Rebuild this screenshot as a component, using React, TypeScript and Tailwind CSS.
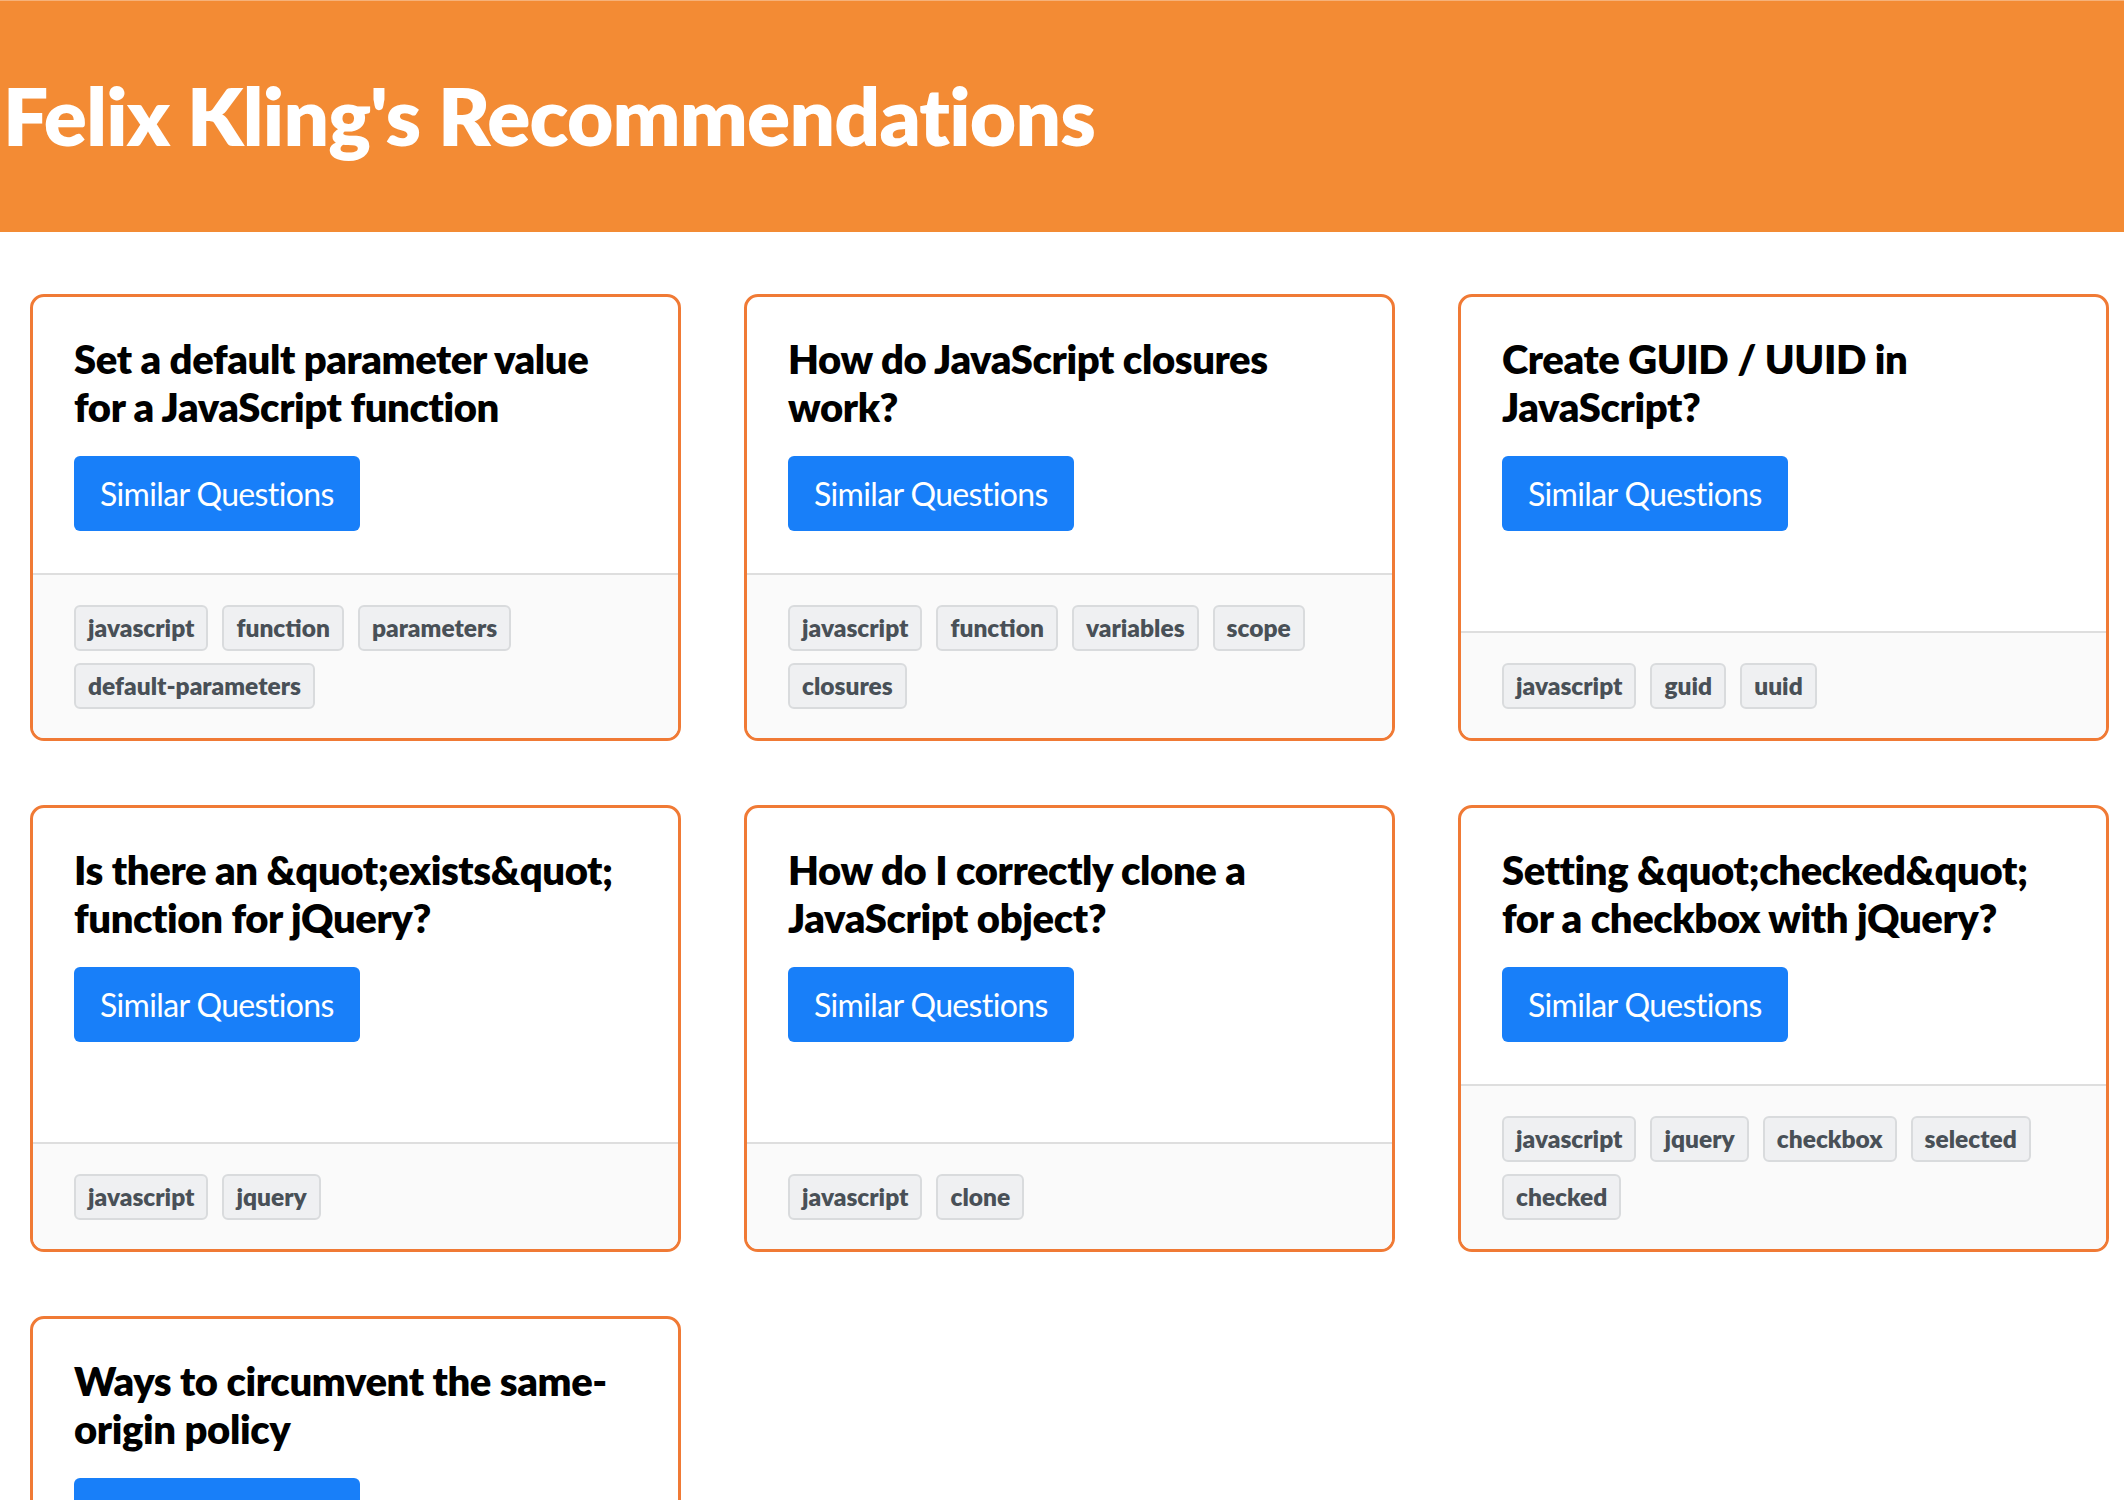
import React from 'react';

interface Recommendation {
    title: string;
    tags: string[];
}

const recommendations: Recommendation[] = [
    { title: 'Set a default parameter value for a JavaScript function', tags: ['javascript', 'function', 'parameters', 'default-parameters'] },
    { title: 'How do JavaScript closures work?', tags: ['javascript', 'function', 'variables', 'scope', 'closures'] },
    { title: 'Create GUID / UUID in JavaScript?', tags: ['javascript', 'guid', 'uuid'] },
    { title: 'Is there an &quot;exists&quot; function for jQuery?', tags: ['javascript', 'jquery'] },
    { title: 'How do I correctly clone a JavaScript object?', tags: ['javascript', 'clone'] },
    { title: 'Setting &quot;checked&quot; for a checkbox with jQuery?', tags: ['javascript', 'jquery', 'checkbox', 'selected', 'checked'] },
    { title: 'Ways to circumvent the same-origin policy', tags: ['javascript', 'ajax', 'cross-domain', 'same-origin-policy'] },
];

const font = { fontFamily: 'Lato, "Open Sans", sans-serif' };

const RecommendationCard: React.FC<{ item: Recommendation }> = ({ item }) => (
    <div className="flex flex-col border-[3px] border-[#f07a35] rounded-[14px] overflow-hidden bg-white">
        {/* Body */}
        <div className="flex-1 px-[41px] pt-[38px] pb-[42px]">
            <h2 className="text-[40px] leading-[48px] font-extrabold text-black tracking-[-0.01em]">{item.title}</h2>
            <button className="mt-[25px] h-[75px] px-[26px] rounded-[6px] bg-[#187ff9] text-white text-[32px] tracking-[-0.02em]">
                Similar Questions
            </button>
        </div>

        {/* Tags */}
        <div className="border-t-2 border-[#dedede] bg-[#fafafa] px-[41px] pt-[30px] pb-[29px] flex flex-wrap gap-x-[14px] gap-y-[12px]">
            {item.tags.map(tag => (
                <span
                    key={tag}
                    className="h-[46px] flex items-center px-[12px] border-2 border-[#d9dbdd] rounded-[6px] bg-[#eff0f2] text-[#495057] text-[24.5px] font-extrabold"
                >
                    {tag}
                </span>
            ))}
        </div>
    </div>
);

const App: React.FC = () => {
    return (
        <div className="min-h-screen bg-white" style={font}>
            {/* Header */}
            <header className="h-[232px] bg-[#f38b34] border-t border-[#f6b27a] flex items-center pl-[3px] pb-[4px]">
                <h1 className="text-[80px] font-extrabold text-white tracking-[-0.01em]">Felix Kling's Recommendations</h1>
            </header>

            <main className="pt-[62px] pl-[30px] pb-[40px] grid grid-cols-[repeat(3,651px)] gap-x-[63px] gap-y-[64px]">
                {recommendations.map(r => (
                    <RecommendationCard key={r.title} item={r} />
                ))}
            </main>
        </div>
    );
};

export default App;
